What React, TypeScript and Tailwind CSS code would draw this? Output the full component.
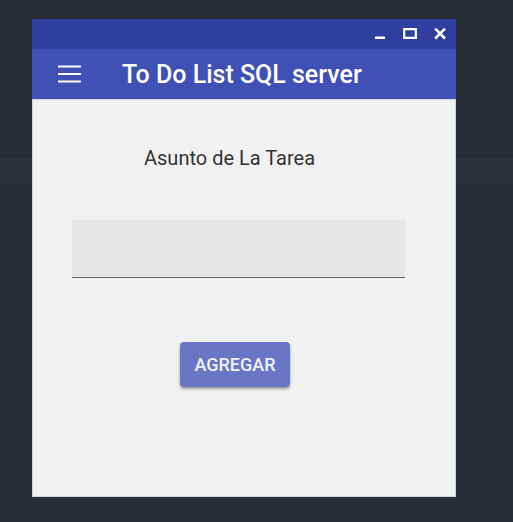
import React from "react";

function TitleBar() {
  return (
    <div className="flex h-[30px] items-center justify-end gap-3 bg-[#303f9f] pr-[7px] text-white">
      <button type="button" aria-label="Minimizar" className="flex size-[18px] items-center justify-center">
        <svg width="18" height="18" viewBox="0 0 18 18" fill="none" stroke="currentColor" strokeWidth="2.5">
          <path d="M4 12.75H14" />
        </svg>
      </button>
      <button type="button" aria-label="Maximizar" className="flex size-[18px] items-center justify-center">
        <svg width="18" height="18" viewBox="0 0 18 18" fill="none" stroke="currentColor" strokeWidth="2.2">
          <path d="M3.2 4.2H14.8V12.8H3.2Z" />
        </svg>
      </button>
      <button type="button" aria-label="Cerrar" className="flex size-[18px] items-center justify-center">
        <svg width="18" height="18" viewBox="0 0 18 18" fill="none" stroke="currentColor" strokeWidth="2.5">
          <path d="M4.2 3.7L14 13.5M14 3.7L4.2 13.5" />
        </svg>
      </button>
    </div>
  );
}

function AppBar() {
  return (
    <header className="flex h-[50px] items-center gap-10 bg-[#3f51b5] pt-0.5 pl-6 text-white">
      <button type="button" aria-label="Menú" className="flex size-[26px] items-center justify-center">
        <svg width="26" height="20" viewBox="0 0 26 20" fill="none" stroke="currentColor" strokeWidth="2">
          <path d="M2 1.5H25M2 9H25M2 16.5H25" />
        </svg>
      </button>
      <h1 className="text-[25px] font-medium">To Do List SQL server</h1>
    </header>
  );
}

export default function App() {
  return (
    <div className="min-h-screen bg-[#282c34] bg-[linear-gradient(#2d313c,#2d313c)] bg-[length:100%_19px] bg-[position:0_158px] bg-no-repeat pt-[19px] pr-[57px] pl-8 font-[Roboto,sans-serif]">
      <main className="bg-[#f1f1f1]">
        <TitleBar />
        <AppBar />
        <form className="flex flex-col items-start border border-[#d6d6d6] pt-11 pr-[50px] pb-[109px] pl-[39px]">
          <label htmlFor="asunto" className="ml-18 text-xl text-[#333333]">
            Asunto de La Tarea
          </label>
          <input id="asunto" type="text" className="mt-12 h-[58px] w-full border-b border-[#666666] bg-[#e7e7e7] px-3 outline-none" />
          <button type="button" className="mt-16 ml-27 h-[45px] w-[110px] rounded bg-[#6876c5] text-lg font-medium text-[#f1f1f8] shadow-[0_2px_3px_rgba(0,0,0,0.35)]">
            AGREGAR
          </button>
        </form>
      </main>
    </div>
  );
}
